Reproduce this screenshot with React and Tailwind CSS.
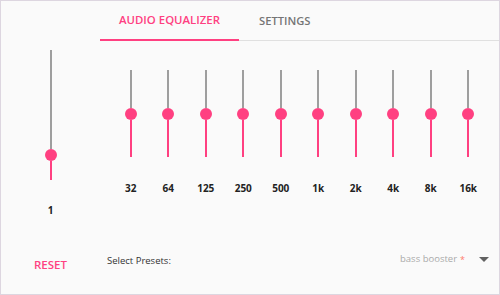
import React from 'react'

const bands = ['32', '64', '125', '250', '500', '1k', '2k', '4k', '8k', '16k']

function VSlider({ above, below }) {
  return (
    <div className="flex flex-col items-center">
      <div className="w-[2px] bg-[#9e9e9e]" style={{ height: above }} />
      <div className="w-[12px] h-[12px] rounded-full bg-[#ff4081]" />
      <div className="w-[2px] bg-[#ff4081]" style={{ height: below }} />
    </div>
  )
}

export default function App() {
  return (
    <div
      className="w-[500px] h-[295px] border border-[#ddd6e0] bg-[#fafafa] flex flex-col overflow-hidden"
      style={{ fontFamily: '"Open Sans", "Noto Sans", sans-serif' }}
    >
      {/* tabs */}
      <div className="ml-[99px] flex border-b border-[#e0e0e0] h-[40px]">
        <div className="w-[139px] h-[40px] border-b-2 border-[#ff4081] flex items-center justify-center text-[11.4px] font-semibold text-[#ff4081]">
          AUDIO EQUALIZER
        </div>
        <div className="pl-[20px] h-[40px] flex items-center text-[11.2px] font-semibold text-[#757575]">
          SETTINGS
        </div>
      </div>

      {/* sliders */}
      <div className="flex h-[199px]">
        <div className="w-[99px] flex flex-col items-center pt-[9px]">
          <VSlider above={99} below={19} />
          <div className="mt-[23px] text-[10px] font-bold text-[#222] leading-[15px]">1</div>
        </div>
        <div className="flex pl-[12px] pt-[29px]">
          {bands.map((b) => (
            <div key={b} className="w-[37.5px] flex flex-col items-center">
              <VSlider above={38} below={37} />
              <div className="mt-[24px] text-[10px] font-bold text-[#222] leading-[15px]">{b}</div>
            </div>
          ))}
        </div>
      </div>

      {/* bottom bar */}
      <div className="flex items-center h-[44px]">
        <div className="w-[99px] flex justify-center pt-[6px]">
          <span className="text-[11.5px] font-semibold text-[#ff4081]">RESET</span>
        </div>
        <div className="ml-[7px] text-[9.5px] text-[#333] pb-[1px]">Select Presets:</div>
        <div className="ml-auto flex items-center mr-[10px] pb-[5px]">
          <span className="text-[9.5px] text-[#aaaaaa]">bass booster</span>
          <span className="ml-[3px] text-[9px] text-[#ff7b6b]">*</span>
          <svg className="ml-[14px]" width="10" height="5" viewBox="0 0 10 5">
            <path d="M0 0 L10 0 L5 5 Z" fill="#616161" />
          </svg>
        </div>
      </div>
    </div>
  )
}
